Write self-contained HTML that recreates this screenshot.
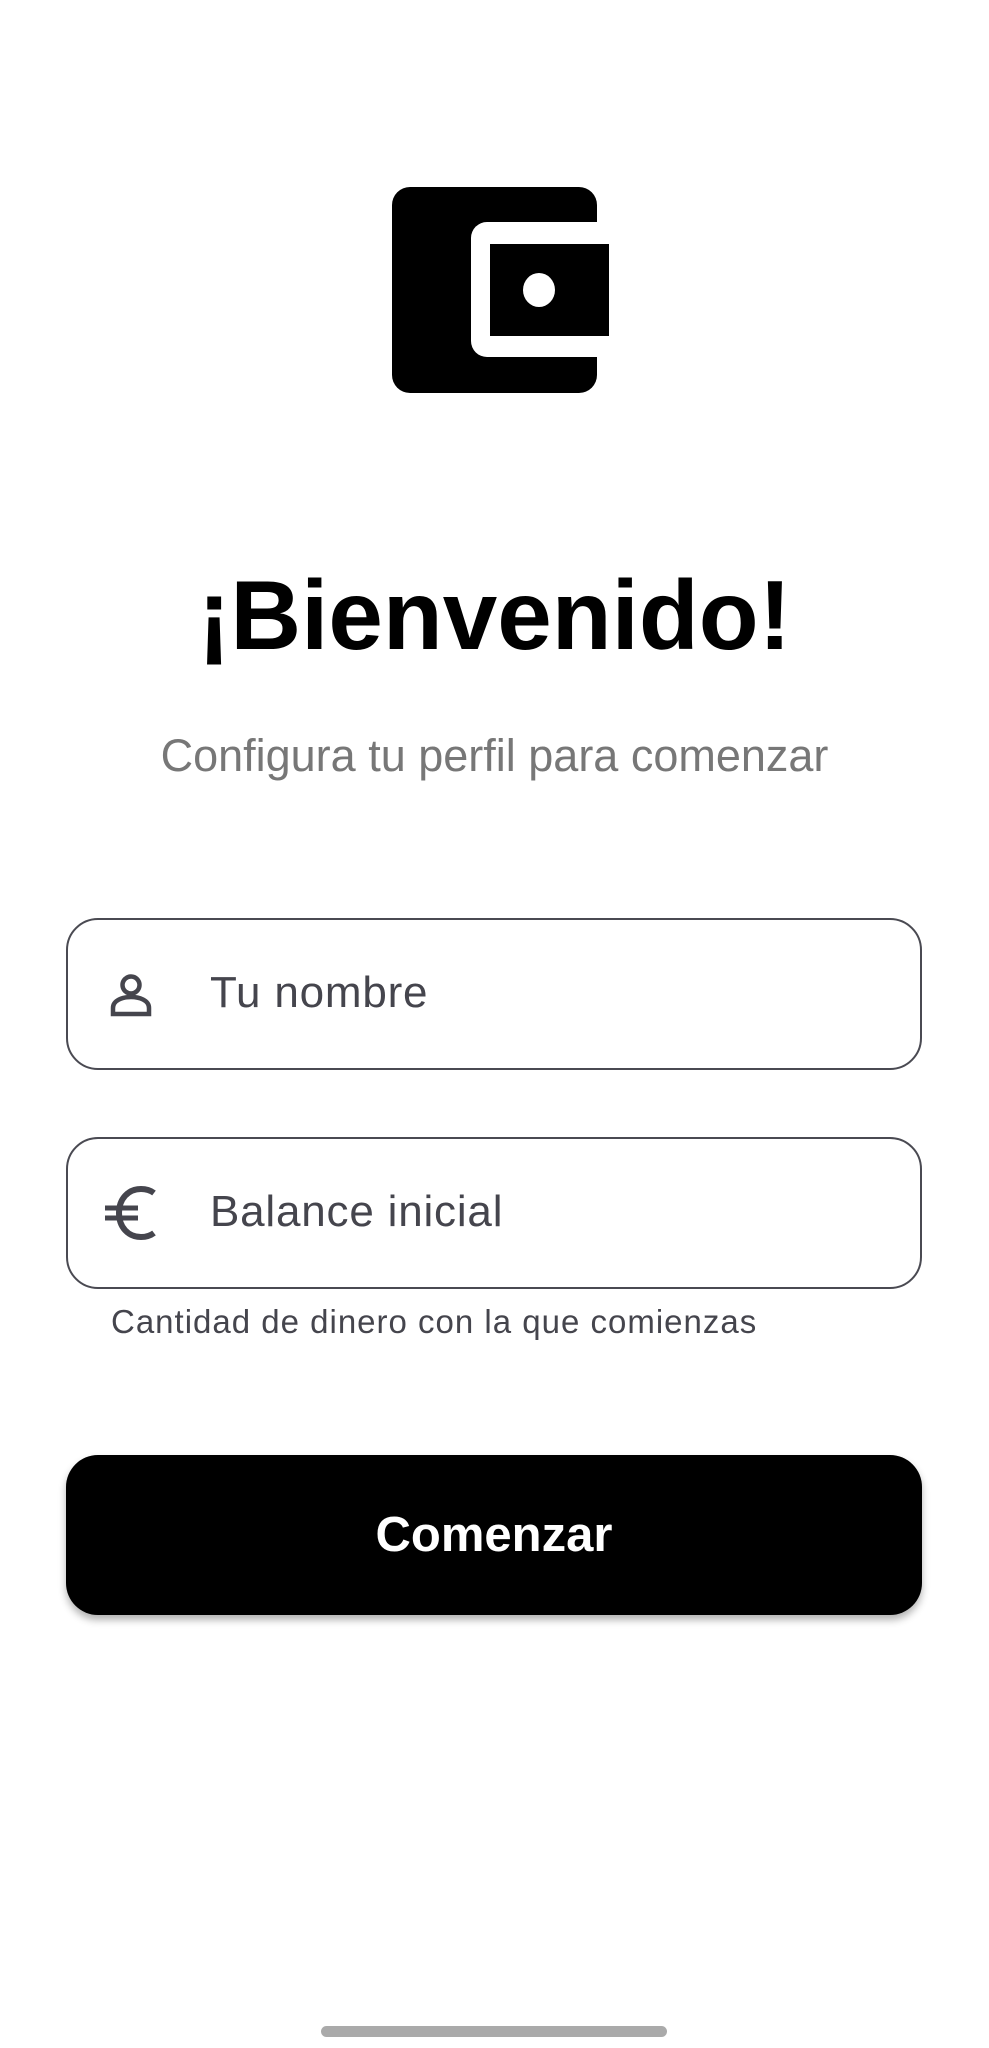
<!DOCTYPE html>
<html><head><meta charset="utf-8"><style>
html,body{margin:0;padding:0;background:#fff;}
body{width:989px;height:2048px;position:relative;overflow:hidden;font-family:"Liberation Sans",sans-serif;}
.abs{position:absolute;}
.title{left:0;width:989px;top:560px;text-align:center;font-weight:bold;font-size:98px;line-height:110px;color:#000;}
.sub{left:0;width:989px;top:728px;text-align:center;font-size:45px;line-height:56px;color:#777;}
.field{left:66px;width:852px;border:2.5px solid #4a4a52;border-radius:32px;}
.ph{left:210px;font-size:44px;line-height:50px;color:#45454d;letter-spacing:0.8px;}
.help{left:111px;top:1301px;font-size:33px;line-height:42px;color:#45454d;letter-spacing:1px;}
.btn{left:66px;top:1455px;width:856px;height:160px;background:#000;border-radius:32px;box-shadow:0 5px 8px rgba(0,0,0,0.3);color:#fff;font-weight:bold;font-size:49px;text-align:center;line-height:160px;}
.bar{left:321px;top:2026px;width:346px;height:11px;border-radius:6px;background:#aaa;}
</style></head><body>
<svg class="abs" style="left:0;top:0" width="989" height="420">
<rect x="392" y="187" width="205" height="206" rx="18" fill="#000"/>
<rect x="471" y="222" width="145" height="135" rx="16" fill="#fff"/>
<rect x="490" y="244" width="119" height="92" fill="#000"/>
<ellipse cx="539" cy="290" rx="16" ry="17" fill="#fff"/>
</svg>
<div class="abs title">¡Bienvenido!</div>
<div class="abs sub">Configura tu perfil para comenzar</div>
<div class="abs field" style="top:918px;height:148px;"></div>
<svg class="abs" style="left:100px;top:965px" width="60" height="60" viewBox="0 0 60 60">
<circle cx="31" cy="20" r="8.5" fill="none" stroke="#45454d" stroke-width="4.5"/>
<path d="M13 49 V43 C13 35 23 32 31 32 C39 32 49 35 49 43 V49 Z" fill="none" stroke="#45454d" stroke-width="4.5" stroke-linejoin="miter"/>
</svg>
<div class="abs ph" style="top:968px;">Tu nombre</div>
<div class="abs field" style="top:1137px;height:148px;"></div>
<svg class="abs" style="left:100px;top:1184px" width="62" height="60" viewBox="0 0 62 60">
<path d="M54 9 C50 6 46 5 41 5 C28 5 19 15 19 29 C19 43 28 53 41 53 C46 53 50 52 54 49" fill="none" stroke="#45454d" stroke-width="6"/>
<path d="M5 24 H38 M5 34 H38" stroke="#45454d" stroke-width="5"/>
</svg>
<div class="abs ph" style="top:1187px;">Balance inicial</div>
<div class="abs help">Cantidad de dinero con la que comienzas</div>
<div class="abs btn">Comenzar</div>
<div class="abs bar"></div>
</body></html>
